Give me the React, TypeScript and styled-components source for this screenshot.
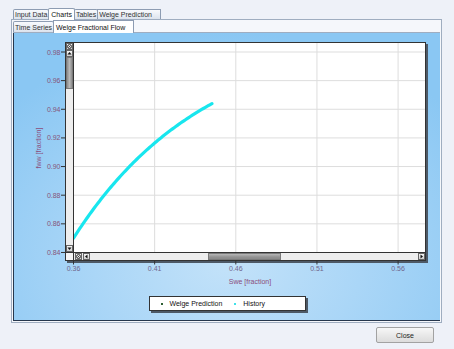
import React from "react";
import styled, { createGlobalStyle } from "styled-components";

const GlobalStyle = createGlobalStyle`
  html, body {
    margin: 0;
    padding: 0;
    background: #eef1f8;
  }
  body {
    font-family: "Liberation Sans", Arial, sans-serif;
  }
  * {
    box-sizing: border-box;
  }
`

const Window = styled.div`
  width: 454px;
  height: 349px;
  padding: 8px 0 0 11px;
  background: #eef1f8;
  overflow: hidden;
  font-size: 7px;
  color: #222;
`

const TabStrip = styled.div<{ $h: number; $indent?: number }>`
  display: flex;
  align-items: flex-end;
  height: ${p => p.$h}px;
  padding-left: ${p => p.$indent || 0}px;
  position: relative;
  z-index: 1;
`

const Tab = styled.div<{ $active?: boolean; $slant?: boolean; $h: number }>`
  height: ${p => (p.$active ? p.$h + 1 : p.$h - 1)}px;
  margin-bottom: ${p => (p.$active ? -1 : 0)}px;
  margin-right: -1px;
  padding: 0 ${p => (p.$slant ? 8 : p.$active ? 2 : 1)}px 0 ${p => (p.$active ? 2 : 1)}px;
  display: flex;
  align-items: center;
  white-space: nowrap;
  border: 1px solid #8d9cb2;
  border-bottom: none;
  border-radius: 2px ${p => (p.$slant ? "9px 12px" : "2px")} 0 0;
  background: ${p => (p.$active ? "#fff" : "linear-gradient(#f8fafd, #dce3ed)")};
  color: ${p => (p.$active ? "#111" : "#333")};
  position: relative;
  z-index: ${p => (p.$active ? 2 : 1)};
`

const OuterPanel = styled.div`
  width: 431px;
  border: 1px solid #9fadc0;
  background: #f5f7fb;
  padding: 0 1px 1px 1px;
`

const InnerPanel = styled.div`
  border-top: 1px solid #9fadc0;
`

const ChartArea = styled.div`
  height: 288px;
  border-left: 1px solid #26364c;
  border-bottom: 1px solid #26364c;
  background: radial-gradient(ellipse 70% 80% at 50% 80%, #c3e2f9 0%, #aad6f7 45%, #8ac7f3 100%);
  padding-top: 9px;
  display: flex;
  flex-direction: column;
`

const PlotRow = styled.div`
  display: flex;
`

const Frame = styled.div`
  width: 361px;
  height: 219px;
  border: 1px solid #333;
  box-shadow: 2px 2px 0 #4d5966;
  display: grid;
  grid-template-columns: 8px 1fr;
  grid-template-rows: 1fr 8px;
  background: #fff;
`

const VScroll = styled.div`
  display: flex;
  flex-direction: column;
  border-right: 1px solid #333;
  background: #f2f2f2;
`

const HScroll = styled.div`
  display: flex;
  align-items: stretch;
  border-top: 1px solid #333;
  background: #ececec;
`

const Corner = styled.div`
  border-top: 1px solid #333;
  border-right: 1px solid #333;
  background: #f4f4f4;
`

const ScrollBtn = styled.div<{ $gap?: number }>`
  width: 7px;
  height: 7px;
  flex: none;
  margin-left: ${p => p.$gap || 0}px;
  border: 1px solid #666;
  background: linear-gradient(#f6f6f6, #cfcfcf);
  display: flex;
  align-items: center;
  justify-content: center;
`

const Track = styled.div<{ $size?: number }>`
  flex: ${p => (p.$size ? `0 0 ${p.$size}px` : "1")};
  background: #eeeeee;
`

const Thumb = styled.div<{ $vertical?: boolean; $size: number }>`
  flex: 0 0 ${p => p.$size}px;
  border: 1px solid #7a7a7a;
  background: ${p =>
    p.$vertical
      ? "linear-gradient(90deg, #8c8c8c, #b8b8b8 50%, #8c8c8c)"
      : "linear-gradient(#b8b8b8, #929292 60%, #8a8a8a)"};
`

const Legend = styled.div`
  align-self: center;
  margin-top: 5px;
  width: 157px;
  height: 15px;
  border: 1px solid #333;
  background: #fff;
  box-shadow: 2px 2px 0 #4d5966;
  display: flex;
  align-items: center;
  padding-left: 11px;
  gap: 12px;
  color: #111;
`

const LegendItem = styled.div`
  display: flex;
  align-items: center;
  gap: 7px;
`

const Marker = styled.span<{ $color: string }>`
  width: 2px;
  height: 2px;
  background: ${p => p.$color};
`

const Footer = styled.div`
  width: 431px;
  display: flex;
  justify-content: flex-end;
  padding-right: 8px;
  margin-top: 4px;
`

const CloseButton = styled.button`
  width: 58px;
  height: 16px;
  padding: 0;
  font: inherit;
  font-size: 7px;
  color: #222;
  border: 1px solid #a2a2a2;
  border-radius: 2px;
  background: linear-gradient(#f7f7f7, #e9e9e9 50%, #dcdcdc);
`

// scales (pixels inside the plot)
const yOf = (fw: number) => 9 + (0.98 - fw) * 1432
const xOf = (sw: number) => -0.5 + (sw - 0.36) * 1623

const yTicks = [0.98, 0.96, 0.94, 0.92, 0.9, 0.88, 0.86, 0.84]
const xTicks = [0.36, 0.41, 0.46, 0.51, 0.56]

const curve = (() => {
  const pts: string[] = []
  for (let i = 0; i <= 86; i++) {
    const u = Math.min(i * 0.001, 0.0853)
    const fw = 0.9946 - 0.1446 * Math.exp(-12.3 * u)
    pts.push(`${xOf(0.36 + u).toFixed(2)},${yOf(fw).toFixed(2)}`)
  }
  return pts.join(" ")
})()

const Triangle = ({ dir }: { dir: "up" | "down" | "left" | "right" }) => {
  const pts = {
    up: "0.5,3.5 2.5,1 4.5,3.5",
    down: "0.5,1.5 2.5,4 4.5,1.5",
    left: "3.5,0.5 1,2.5 3.5,4.5",
    right: "1.5,0.5 4,2.5 1.5,4.5",
  }[dir]
  return (
    <svg width="5" height="5" viewBox="0 0 5 5">
      <polygon points={pts} fill="#111" />
    </svg>
  )
}

const ResetIcon = () => (
  <svg width="5" height="5" viewBox="0 0 5 5">
    <circle cx="2.5" cy="2.5" r="2" fill="none" stroke="#222" strokeWidth="0.8" />
    <path d="M1.5 1.5 L3.5 3.5 M3.5 1.5 L1.5 3.5" stroke="#222" strokeWidth="0.6" />
  </svg>
)

const YAxis = () => (
  <svg width="51" height="219" style={{ flex: "none" }}>
    <text
      transform="translate(27 106) rotate(-90)"
      textAnchor="middle"
      fontSize="7"
      fill="#8a4d7b"
      fontFamily="Liberation Sans, Arial, sans-serif"
    >
      fww [fraction]
    </text>
    {yTicks.map(t => {
      const y = yOf(t) + 1
      return (
        <g key={t}>
          <text
            x="46.5"
            y={y + 2.5}
            textAnchor="end"
            fontSize="7"
            fill="#86557a"
            fontFamily="Liberation Sans, Arial, sans-serif"
          >
            {t.toFixed(2)}
          </text>
          <line x1="47" x2="52" y1={y} y2={y} stroke="#333" strokeWidth="1" />
        </g>
      )
    })}
  </svg>
)

const Plot = () => (
  <svg width="351" height="209" style={{ display: "block" }}>
    {yTicks.slice(0, 7).map(t => (
      <line key={t} x1="0" x2="351" y1={yOf(t)} y2={yOf(t)} stroke="#dddddd" strokeWidth="1" />
    ))}
    {xTicks.slice(1).map(t => (
      <line key={t} y1="0" y2="209" x1={xOf(t)} x2={xOf(t)} stroke="#dddddd" strokeWidth="1" />
    ))}
    <polyline points={curve} fill="none" stroke="#18e6ee" strokeWidth="3.2" strokeLinecap="round" />
  </svg>
)

const XAxis = () => (
  <svg width="370" height="30" style={{ marginLeft: 51, display: "block", flex: "none" }}>
    {xTicks.map(t => {
      const x = xOf(t) + 9
      return (
        <g key={t}>
          <line x1={x} x2={x} y1="0" y2="3.5" stroke="#333" strokeWidth="1" />
          <text
            x={x}
            y="9.7"
            textAnchor="middle"
            fontSize="7"
            fill="#6f678c"
            fontFamily="Liberation Sans, Arial, sans-serif"
          >
            {t.toFixed(2)}
          </text>
        </g>
      )
    })}
    <text
      x="185"
      y="22.5"
      textAnchor="middle"
      fontSize="7"
      fill="#8a4d7b"
      fontFamily="Liberation Sans, Arial, sans-serif"
    >
      Swe [fraction]
    </text>
  </svg>
)

export default function App() {
  return (
    <>
      <GlobalStyle />
      <Window>
        <TabStrip $h={11} $indent={2}>
          <Tab $h={11}>Input Data</Tab>
          <Tab $h={11} $active>Charts</Tab>
          <Tab $h={11}>Tables</Tab>
          <Tab $h={11} $slant>Welge Prediction</Tab>
        </TabStrip>
        <OuterPanel>
          <TabStrip $h={12}>
            <Tab $h={12}>Time Series</Tab>
            <Tab $h={12} $active $slant>Welge Fractional Flow</Tab>
          </TabStrip>
          <InnerPanel>
            <ChartArea>
              <PlotRow>
                <YAxis />
                <Frame>
                  <VScroll>
                    <ScrollBtn><ResetIcon /></ScrollBtn>
                    <ScrollBtn><Triangle dir="up" /></ScrollBtn>
                    <Thumb $vertical $size={32} />
                    <Track />
                    <ScrollBtn><Triangle dir="down" /></ScrollBtn>
                  </VScroll>
                  <Plot />
                  <Corner />
                  <HScroll>
                    <ScrollBtn $gap={1}><ResetIcon /></ScrollBtn>
                    <ScrollBtn $gap={1}><Triangle dir="left" /></ScrollBtn>
                    <Track $size={118} />
                    <Thumb $size={73} />
                    <Track />
                    <ScrollBtn><Triangle dir="right" /></ScrollBtn>
                  </HScroll>
                </Frame>
              </PlotRow>
              <XAxis />
              <Legend>
                <LegendItem>
                  <Marker $color="#2d5e34" />
                  Welge Prediction
                </LegendItem>
                <LegendItem>
                  <Marker $color="#3ee2ea" />
                  History
                </LegendItem>
              </Legend>
            </ChartArea>
          </InnerPanel>
        </OuterPanel>
        <Footer>
          <CloseButton>Close</CloseButton>
        </Footer>
      </Window>
    </>
  )
}
